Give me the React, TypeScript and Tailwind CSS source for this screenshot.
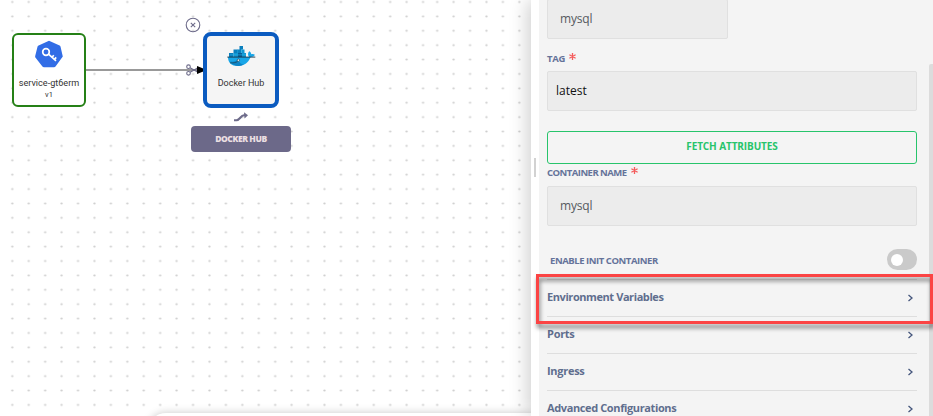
import React from "react";

const labelFont = "font-['Open_Sans','Noto_Sans',sans-serif]";

function Label({ text, tracking, star }: { text: string; tracking: string; star?: boolean }) {
  return (
    <div className="flex h-[14px] items-center whitespace-nowrap text-[9.5px] font-bold text-[#65739a]">
      <span className={tracking}>{text}</span>
      {star && (
        <svg className="mb-[5px] ml-1" width="7" height="7" viewBox="0 0 7 7" stroke="#f45b5b" strokeWidth="1.3">
          <path d="M3.5 0v7M.4 1.8l6.2 3.4M.4 5.2l6.2-3.4" />
        </svg>
      )}
    </div>
  );
}

function Field({ value, size, color }: { value: string; size: string; color: string }) {
  return (
    <div className={`flex h-10 items-center rounded-[2px] border border-[#e0e0e0] bg-[#ececec] text-[12px] font-medium ${size} ${color}`}>
      {value}
    </div>
  );
}

function Row({ text, tracking }: { text: string; tracking: string }) {
  return (
    <div className="flex h-[37px] shrink-0 items-center justify-between border-t border-[#dedede] text-[11px] font-bold text-[#5f6e8e]">
      <span className={`whitespace-nowrap pb-px ${tracking}`}>{text}</span>
      <svg className="mr-[3px]" width="7" height="8" viewBox="0 0 7 8" fill="none" stroke="#46577d" strokeWidth="1.3">
        <path d="M1.5 1 5 4 1.5 7" />
      </svg>
    </div>
  );
}

function KeyIcon() {
  return (
    <svg width="28" height="28" viewBox="0 0 28 28">
      <path d="M14 .8 24.6 5.6Q25.4 6 25.6 7L27.8 16.5 20.5 26.5Q20 27.2 19 27.2H9Q8 27.2 7.4 26.5L.4 17.5Q0 17 .2 16L2.5 6.8Q2.7 5.8 3.6 5.4Z" fill="#326de6" />
      <g fill="none" stroke="#fff" strokeWidth="1.7">
        <circle cx="11" cy="12" r="3.3" />
        <path d="m13.5 14.2 7.5 6.6M17 17.3l1.8-2M19.4 19.4l1.8-2" />
      </g>
    </svg>
  );
}

function DockerIcon() {
  return (
    <svg width="29" height="22" viewBox="0 0 29 22">
      <path d="M1 12h21c-1.4-2-1.2-4.2.2-5.8 1.3.7 2 1.8 2.1 3.1 1.3-.4 2.5-.2 3.6.5-.7 1.5-2.2 2.3-4.2 2.2C20.8 18.5 16.5 21 10.5 21 4.8 21 1 18 1 12Z" fill="#18a6e8" />
      <path d="M3.2 16.5c3.2.5 5.8-.2 8.2-2 .6 3 2.7 5 5.8 5.1-5.2 2.6-11.6 1.4-14-3.1Z" fill="#0d83c5" />
      <path d="M2 8h4.5v4H2zM6.5 4.5h8V8h-8zM12.5 1H16v3.5h-3.5z" fill="#0a7fbd" />
      <path d="M6.5 8H11v4H6.5zM15 8h4v4h-4zM14.5 4.5h3V8h-3z" fill="#1296d2" />
      <path d="M11 8h4v4h-4z" fill="#075c96" />
      <path d="M10.7 4.5v3.5M14.5 4.5v3.5M3 9.8h16" stroke="#2ab9ef" strokeWidth=".5" />
      <path d="M.3 12.1h28" stroke="#173447" strokeWidth=".9" />
      <circle cx="11.4" cy="15.2" r="1.2" fill="#e9f4f6" stroke="#17455b" strokeWidth=".7" />
      <path d="M3 17.8c3 .4 5.6-.1 7.6-1.3" fill="none" stroke="#174f6a" strokeWidth=".9" />
    </svg>
  );
}

export default function App() {
  return (
    <div className={`relative flex h-[416px] w-[933px] overflow-hidden bg-white ${labelFont}`}>
      <main className="relative h-full w-[531px] shrink-0 overflow-hidden">
        <svg className="absolute inset-0" width="531" height="416">
          <defs>
            <pattern id="dots" x="4.1" y="-5.2" width="16.43" height="14.39" patternUnits="userSpaceOnUse">
              <ellipse cx="8.2" cy="7.2" rx="1.2" ry=".85" fill="#cecece" />
            </pattern>
            <pattern id="dotsEnd" x="1.8" y="-5.2" width="16.43" height="14.39" patternUnits="userSpaceOnUse">
              <ellipse cx="8.2" cy="7.2" rx="1.2" ry=".85" fill="#cecece" />
            </pattern>
          </defs>
          <rect width="430" height="416" fill="url(#dots)" />
          <rect x="430" width="101" height="416" fill="url(#dotsEnd)" />
          <path d="M86 70H200" stroke="#777" strokeWidth="1.3" />
          <g fill="none" stroke="#6d6b8a" strokeWidth="1.1">
            <circle cx="193" cy="25" r="6.8" />
            <path d="m190.8 22.8 4.4 4.4m0-4.4-4.4 4.4" />
            <circle cx="188.5" cy="66.7" r="1.8" />
            <circle cx="188.5" cy="73.3" r="1.8" />
            <path d="m190 67.7 9 5m-9-.4 9-5" strokeWidth="1.3" />
          </g>
          <path d="m197 66 10 4-10 4Z" fill="#000" />
        </svg>
        <div className="absolute left-3 top-[33px] flex h-[74px] w-[74px] flex-col items-center rounded-[6px] border-[2.5px] border-[#258016] bg-white font-['Roboto',sans-serif] text-[#333]">
          <div className="mt-[5px]"><KeyIcon /></div>
          <span className="mt-[10px] whitespace-nowrap text-[9.1px] leading-[11px]">service-gt6erm</span>
          <span className="mt-px text-[7.5px] leading-[9px]">v1</span>
        </div>
        <div className="absolute left-[203px] top-8 flex h-[76px] w-[76px] flex-col items-center rounded-[8px] border-4 border-[#0b5bc0] bg-[#f5f5f5] font-['Roboto',sans-serif] text-[#333]">
          <div className="mt-[9px]"><DockerIcon /></div>
          <span className="mt-[11px] whitespace-nowrap text-[9px] leading-[11px]">Docker Hub</span>
        </div>
        <svg className="absolute left-[233px] top-[112px]" width="16" height="11" viewBox="0 0 16 11">
          <path d="M1 8.2h2.5C7 8.2 7.5 3.5 11 3.3h2" fill="none" stroke="#6d6b8a" strokeWidth="2.1" />
          <path d="m11 .3 4 3-3.5 3.2Z" fill="#6d6b8a" />
        </svg>
        <div className="absolute left-[191px] top-[126px] flex h-[26px] w-[100px] items-center justify-center rounded-[4px] bg-[#6c6989] text-[8.5px] font-extrabold tracking-[-0.4px] text-[#eadfe2]">
          DOCKER HUB
        </div>
        <div className="absolute left-[148px] top-[413px] h-10 w-[500px] rounded-[18px] bg-white shadow-[0_0_9px_rgba(0,0,0,0.22)]" />
      </main>

      <aside className="relative flex h-full w-[402px] shrink-0 bg-white shadow-[-3px_0_18px_rgba(0,0,0,0.2)]">
        <div className="flex w-2 shrink-0 items-start pl-[3px] pt-[158px]">
          <div className="h-[19px] w-[2px] bg-[#d2d2d2]" />
        </div>
        <div className="flex h-full w-[390px] flex-col bg-[#f4f4f4] pl-2 pr-3">
          <div className="-mt-px h-10 w-[181px] shrink-0">
            <Field value="mysql" size="pl-3 tracking-[-0.2px]" color="text-[#565a60]" />
          </div>
          <div className="mt-[13px]"><Label text="TAG" tracking="tracking-[-0.3px]" star /></div>
          <div className="mt-[5px]"><Field value="latest" size="pl-2" color="text-[#111]" /></div>
          <button className="mt-5 h-[33px] shrink-0 rounded-[3px] border border-[#27c46b] pb-[2px] text-[10px] font-bold tracking-[-0.1px] text-[#27c46b]">
            FETCH ATTRIBUTES
          </button>
          <div className="mt-[2px]"><Label text="CONTAINER NAME" tracking="tracking-[-0.52px]" star /></div>
          <div className="mt-[6px]"><Field value="mysql" size="pl-3 tracking-[-0.2px]" color="text-[#565a60]" /></div>
          <div className="mt-[23px] flex h-[21px] items-center justify-between pl-[3px]">
            <div className="pt-[3px]"><Label text="ENABLE INIT CONTAINER" tracking="tracking-[-0.44px]" /></div>
            <div className="flex h-[21px] w-[30px] items-center rounded-full bg-[#cacaca] pl-1">
              <div className="h-3 w-3 rounded-full bg-white" />
            </div>
          </div>
          <div className="mt-[9px] flex flex-col">
            <Row text="Environment Variables" tracking="tracking-[-0.42px]" />
            <Row text="Ports" tracking="tracking-[-0.28px]" />
            <Row text="Ingress" tracking="tracking-[-0.28px]" />
            <Row text="Advanced Configurations" tracking="tracking-[-0.38px]" />
          </div>
        </div>
        <div className="h-full w-1 bg-[#f4f4f4] pt-16">
          <div className="h-[352px] rounded-tl-[2px] bg-[#dcdcdc]" />
        </div>
      </aside>
      <div className="absolute left-[536px] top-[274px] h-[50px] w-[397px] border-[3px] border-[#fb4444] drop-shadow-[1px_4px_2px_rgba(0,0,0,0.5)]" />
    </div>
  );
}
